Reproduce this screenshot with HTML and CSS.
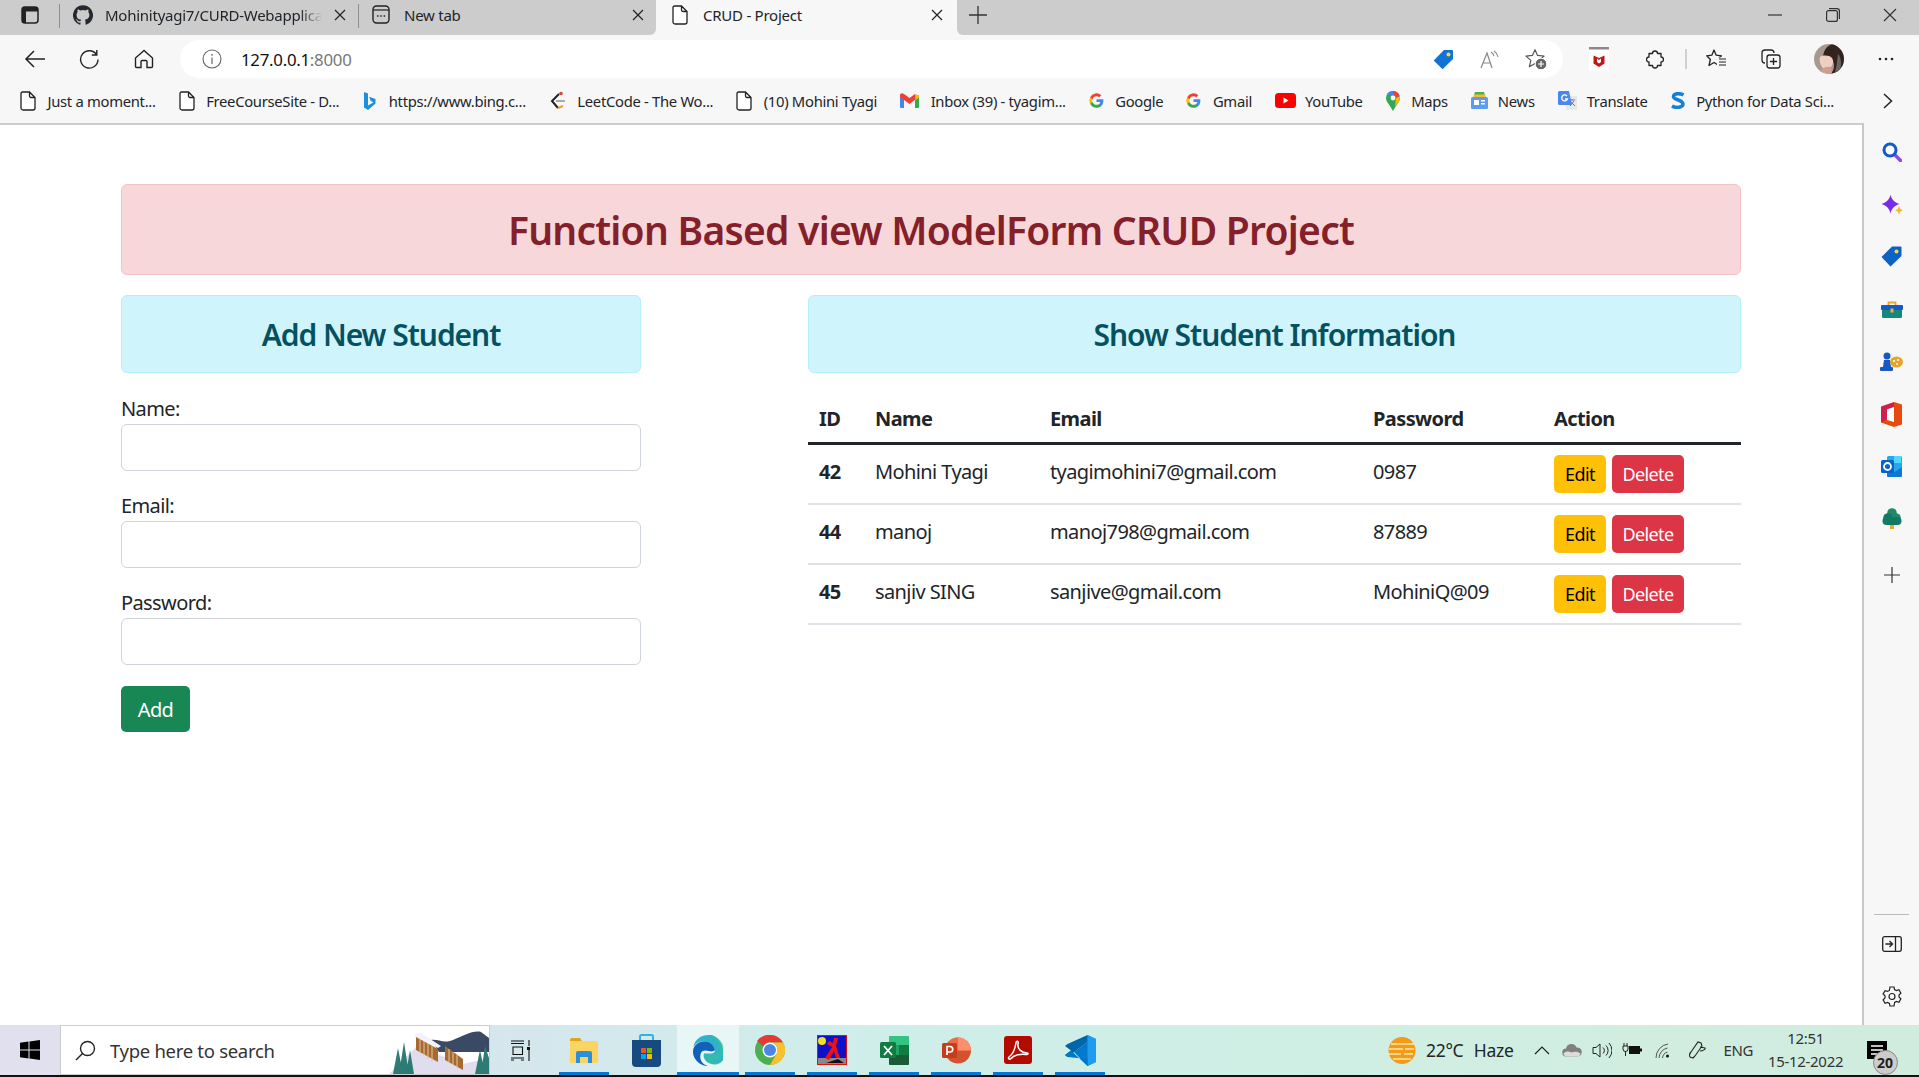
FILE: index.html
```html
<!DOCTYPE html>
<html>

<head>
    <meta charset="UTF-8">
    <title>CRUD - Project</title>
    <link rel="stylesheet" href="styles.css">
</head>

<body>
    <svg class="defs" width="0" height="0">
        <symbol id="doc" viewBox="0 0 16 20">
            <path d="M2.500 1h7L15 6.500V17a2 2 0 0 1-2 2H3a2 2 0 0 1-2-2V2.500A1.500 1.500 0 0 1 2.500 1zM9.500 1v4a1.500 1.500 0 0 0 1.500 1.500h4" fill="#fff" stroke="#222" stroke-width="1.300" />
        </symbol>
        <symbol id="google" viewBox="0 0 24 24">
            <path d="M23 12.300c0-.8-.1-1.600-.2-2.300H12v4.400h6.200a5.300 5.300 0 0 1-2.300 3.500v2.900h3.700c2.100-2 3.400-4.900 3.400-8.500z" fill="#4285f4" />
            <path d="M12 23.500c3.100 0 5.700-1 7.600-2.800l-3.700-2.900c-1 .7-2.300 1.100-3.900 1.100-3 0-5.500-2-6.400-4.700H1.800v3A11.500 11.500 0 0 0 12 23.500z" fill="#34a853" />
            <path d="M5.600 14.200a6.900 6.900 0 0 1 0-4.400v-3H1.800a11.500 11.500 0 0 0 0 10.400z" fill="#fbbc05" />
            <path d="M12 5.100c1.700 0 3.200.6 4.400 1.700l3.300-3.300A11.500 11.500 0 0 0 1.800 6.800l3.800 3C6.500 7.100 9 5.100 12 5.100z" fill="#ea4335" />
        </symbol>
    </svg>

    <div class="tabstrip">
        <div class="tabs-left">
            <div class="tab-side">
                <svg width="18" height="18" viewBox="0 0 18 18">
                    <rect x="1" y="1" width="16" height="16" rx="3" fill="none" stroke="#222" stroke-width="1.500" />
                    <path d="M1 2.500a1.500 1.500 0 0 1 1.500-1.500h13a1.500 1.500 0 0 1 1.500 1.500V5.500H1zM1 5h4v12H2a1 1 0 0 1-1-1z" fill="#222" />
                </svg>
            </div>
            <div class="tab tab-first">
                <svg width="20" height="20" viewBox="0 0 24 24">
                    <path d="M12 .3a12 12 0 0 0-3.800 23.400c.6.1.8-.3.8-.6v-2c-3.300.7-4-1.600-4-1.600-.6-1.400-1.400-1.800-1.400-1.800-1-.7.1-.7.1-.7 1.200 0 1.900 1.200 1.900 1.200 1 1.800 2.800 1.300 3.500 1 0-.8.4-1.300.7-1.600-2.700-.3-5.500-1.300-5.500-6 0-1.200.5-2.300 1.300-3.100-.2-.4-.6-1.600 0-3.200 0 0 1-.3 3.400 1.200a11.500 11.500 0 0 1 6 0c2.300-1.500 3.300-1.200 3.300-1.200.6 1.600.2 2.800 0 3.200.9.8 1.300 1.900 1.300 3.200 0 4.600-2.800 5.600-5.500 5.900.5.4.9 1 .9 2.200v3.300c0 .3.100.7.8.6A12 12 0 0 0 12 .3" fill="#24292f" />
                </svg>
                <span class="tab-title fade">Mohinityagi7/CURD-Webapplica</span>
                <svg class="tab-close" width="12" height="12" viewBox="0 0 12 12"><path d="M1 1l10 10M11 1L1 11" stroke="#222" stroke-width="1.200" /></svg>
            </div>
            <div class="tab tab-second">
                <svg width="18" height="19" viewBox="0 0 18 19">
                    <rect x="1" y="1" width="16" height="17" rx="3.500" fill="#ccc" stroke="#222" stroke-width="1.400" />
                    <path d="M1 5h16" stroke="#222" stroke-width="1.200" />
                    <path d="M5 11h1.500M8.300 11h1.500M11.600 11h1.500" stroke="#222" stroke-width="1.500" />
                </svg>
                <span class="tab-title">New tab</span>
                <svg class="tab-close" width="12" height="12" viewBox="0 0 12 12"><path d="M1 1l10 10M11 1L1 11" stroke="#222" stroke-width="1.200" /></svg>
            </div>
        </div>
        <div class="tab tab-active">
            <svg width="16" height="20"><use href="#doc" /></svg>
            <span class="tab-title">CRUD - Project</span>
            <svg class="tab-close" width="12" height="12" viewBox="0 0 12 12"><path d="M1 1l10 10M11 1L1 11" stroke="#222" stroke-width="1.200" /></svg>
        </div>
        <div class="tabs-right">
            <svg class="new-tab" width="18" height="18" viewBox="0 0 18 18"><path d="M9 0v18M0 9h18" stroke="#333" stroke-width="1.300" /></svg>
            <div class="window-btns">
                <span class="window-btn"><svg width="14" height="14" viewBox="0 0 14 14"><path d="M0 7h14" stroke="#333" stroke-width="1.200" /></svg></span>
                <span class="window-btn"><svg width="14" height="14" viewBox="0 0 14 14"><rect x=".6" y="2.600" width="10.800" height="10.800" rx="2" fill="none" stroke="#333" stroke-width="1.200" /><path d="M3 .6h8a2.400 2.400 0 0 1 2.400 2.400v8" fill="none" stroke="#333" stroke-width="1.200" /></svg></span>
                <span class="window-btn"><svg width="14" height="14" viewBox="0 0 14 14"><path d="M1 1l12 12M13 1L1 13" stroke="#333" stroke-width="1.200" /></svg></span>
            </div>
        </div>
    </div>

    <div class="toolbar">
        <div class="nav-btns">
            <svg width="22" height="18" viewBox="0 0 22 18"><path d="M21 9H2M10 1L2 9l8 8" fill="none" stroke="#222" stroke-width="1.500" /></svg>
            <svg width="21" height="21" viewBox="0 0 21 21"><path d="M17.500 5.500A8.700 8.700 0 1 0 19 10.500M17.800 1v5h-5" fill="none" stroke="#222" stroke-width="1.400" /></svg>
            <svg class="nav-home" width="20" height="20" viewBox="0 0 20 20"><path d="M10 1.500L1.500 9v8.500a1 1 0 0 0 1 1H7v-6a1 1 0 0 1 1-1h4a1 1 0 0 1 1 1v6h4.500a1 1 0 0 0 1-1V9z" fill="none" stroke="#222" stroke-width="1.400" /></svg>
        </div>
        <div class="address">
            <svg width="20" height="20" viewBox="0 0 20 20"><circle cx="10" cy="10" r="9" fill="none" stroke="#666" stroke-width="1.100" /><path d="M10 8.500V15" stroke="#666" stroke-width="1.200" /><circle cx="10" cy="5.800" r=".9" fill="#666" /></svg>
            <span class="url">127.0.0.1<span class="url-port">:8000</span></span>
            <div class="address-icons">
                <svg width="21" height="21" viewBox="0 0 21 21"><path d="M11 1h8a1 1 0 0 1 1 1v8L9.500 20.300 .7 11.500z" fill="#0f74d6" /><circle cx="15.500" cy="5.500" r="2" fill="#ffd24a" /></svg>
                <svg width="19" height="19" viewBox="0 0 19 19"><path d="M1 18L7 3l5 15M3 13h7" fill="none" stroke="#888" stroke-width="1.200" /><path d="M11 2a7 7 0 0 1 3 4M14 1a9 9 0 0 1 4 6" fill="none" stroke="#888" stroke-width="1.100" /></svg>
                <svg width="22" height="21" viewBox="0 0 22 21"><path d="M10 .7L12.600 6.400L19 7.100L14.200 11.400L15.600 17.700L10 14.400L4.400 17.700L5.800 11.400L1 7.100L7.400 6.400Z" fill="none" stroke="#555" stroke-width="1.200" stroke-linejoin="round" /><circle cx="16" cy="15" r="5.800" fill="#666" stroke="#fff" stroke-width="1" /><path d="M16 12v6M13 15h6" stroke="#fff" stroke-width="1.200" /></svg>
            </div>
        </div>
        <div class="toolbar-icons">
            <svg class="mcafee" width="20" height="24" viewBox="0 0 20 24"><rect width="20" height="24" fill="#fff" /><rect width="20" height="2.500" fill="#8a8a8a" /><path d="M4.500 8.500L10 11l5.500-2.500v8L10 20l-5.500-3.500z" fill="#c01818" /><path d="M8 11.500l2 1.500 2-1.500v3.500l-2 1.500-2-1.500z" fill="#fff" /></svg>
            <svg class="puzzle" width="18" height="19" viewBox="0 1 18 19"><path d="M3 4.500h3.500a2.500 2.500 0 0 1 5 0H15V8a2.500 2.500 0 0 1 0 5v3.500h-3.500a2.500 2.500 0 0 1-5 0H3V13a2.500 2.500 0 0 1 0-5z" fill="none" stroke="#222" stroke-width="1.300" stroke-linejoin="round" /></svg>
            <span class="toolbar-sep"></span>
            <svg class="favs" width="20" height="20" viewBox="0 0 20 20"><path d="M8 1L10.200 6.200L15.500 6.800L11.500 10.500L12.800 16.500L8 13.500L3 16.500L4.400 10.500L.7 6.800L5.800 6.200Z" fill="none" stroke="#222" stroke-width="1.300" stroke-linejoin="round" /><rect x="11" y="8.500" width="9" height="9" fill="#f7f7f7" /><path d="M13 10h7M13 13h7M13 16h7" stroke="#222" stroke-width="1.200" /></svg>
            <svg class="collections" width="20" height="20" viewBox="0 0 20 20"><path d="M4 14a3 3 0 0 1-3-3V4a3 3 0 0 1 3-3h6a3 3 0 0 1 3 3" fill="none" stroke="#222" stroke-width="1.300" /><rect x="6" y="6" width="13" height="13" rx="2.500" fill="#f7f7f7" stroke="#222" stroke-width="1.300" /><path d="M12.500 9v7M9 12.500h7" stroke="#222" stroke-width="1.300" /></svg>
            <svg class="avatar" width="30" height="30" viewBox="0 0 30 30">
                <defs><clipPath id="avatar-clip"><circle cx="15" cy="15" r="15" /></clipPath></defs>
                <g clip-path="url(#avatar-clip)">
                    <rect width="30" height="30" fill="#a8998f" />
                    <path d="M30 0v30H16c4-3 5-8 3-13-3-3-7-4-10-3C9 7 13 1 19 0z" fill="#33231f" />
                    <path d="M6 13c3-2 9-2 12 1 2 3 1 6-1 9-3 2-7 2-9 0-2-3-3-7-2-10z" fill="#efd0c0" />
                    <path d="M5 30c1-5 6-8 12-7l1 7z" fill="#cf9d8b" />
                    <path d="M24 10c3 3 4 10 2 17l-5 1c2-6 2-12 3-18z" fill="#6b6560" />
                </g>
            </svg>
            <svg class="dots" width="16" height="4" viewBox="0 0 16 4"><circle cx="2" cy="2" r="1.300" fill="#222" /><circle cx="8" cy="2" r="1.300" fill="#222" /><circle cx="14" cy="2" r="1.300" fill="#222" /></svg>
        </div>
    </div>

    <div class="bookmarks">
        <a class="bookmark"><svg width="16" height="20"><use href="#doc" /></svg>Just a moment...</a>
        <a class="bookmark"><svg width="16" height="20"><use href="#doc" /></svg>FreeCourseSite - D...</a>
        <a class="bookmark"><svg width="15" height="20" viewBox="0 0 13 20"><path d="M1 1l4 1.400v12l5.500-3.200-2.700-1.200-1.700-4.200L12.500 8v4.500L5 19l-4-2.500z" fill="#1b8fe0" /></svg>https://www.bing.c...</a>
        <a class="bookmark"><svg width="17" height="20" viewBox="0 0 17 20"><path d="M10 3L3 10l6 7" fill="none" stroke="#222" stroke-width="2" /><path d="M9 17l5-2" stroke="#f0a020" stroke-width="2" /><path d="M7 10h9" stroke="#aaa" stroke-width="2" /><circle cx="12" cy="2.500" r="1.800" fill="#e04040" /></svg>LeetCode - The Wo...</a>
        <a class="bookmark"><svg width="16" height="20"><use href="#doc" /></svg>(10) Mohini Tyagi</a>
        <a class="bookmark"><svg width="19" height="15" viewBox="0 0 19 15"><path d="M0 2.500h4V15H1.300A1.300 1.300 0 0 1 0 13.700z" fill="#4285f4" /><path d="M15 2.500h4v11.200a1.300 1.300 0 0 1-1.300 1.300H15z" fill="#34a853" /><path d="M15 1l4 1.500v2L15 7.500z" fill="#fbbc05" /><path d="M0 2.500C0 .5 2 -.5 4 1l5.500 4L15 1l.5 5.500-6 4.500L4 7 0 4.500z" fill="#ea4335" /></svg>Inbox (39) - tyagim...</a>
        <a class="bookmark"><svg width="15" height="15"><use href="#google" /></svg>Google</a>
        <a class="bookmark"><svg width="15" height="15"><use href="#google" /></svg>Gmail</a>
        <a class="bookmark bookmark-yt"><svg width="21" height="15" viewBox="0 0 21 15"><rect width="21" height="15" rx="3.500" fill="#f00" /><path d="M8.500 4.500v6l5-3z" fill="#fff" /></svg>YouTube</a>
        <a class="bookmark"><svg width="14" height="20" viewBox="0 0 14 20"><path d="M7 0a7 7 0 0 1 7 7c0 4-4 7-7 13C4 14 0 11 0 7a7 7 0 0 1 7-7z" fill="#34a853" /><path d="M1 3a7 7 0 0 1 6-3v5z" fill="#4285f4" /><path d="M7 0a7 7 0 0 1 6.500 4.500L10 7a3 3 0 0 0-3-3z" fill="#ea4335" /><path d="M10 7l3.800-1.500C14.500 9 11 13 9 15z" fill="#fbbc05" /><circle cx="7" cy="7" r="2.400" fill="#fff" /></svg>Maps</a>
        <a class="bookmark bookmark-tight"><svg width="17" height="17" viewBox="0 0 17 17"><path d="M3 3l1-3h9l1 3z" fill="#4caf50" /><path d="M2 5l1-2.500h11l1 2.500z" fill="#f9bb2d" /><rect y="5" width="17" height="12" rx="1.500" fill="#5b9cf2" /><rect x="3" y="8" width="5" height="5" fill="#fff" /><rect x="10" y="8" width="4" height="1.500" fill="#fff" /><rect x="10" y="11" width="4" height="1.500" fill="#fff" /></svg>News</a>
        <a class="bookmark bookmark-tight"><svg width="19" height="19" viewBox="0 0 19 19"><rect x="8" y="5" width="11" height="14" fill="#e8e8e8" /><path d="M11 9h6M14 8v1M12 15l4-5M13 11l4 4" stroke="#777" stroke-width="1" fill="none" /><path d="M1.500 0H11l3 14H1.500A1.500 1.500 0 0 1 0 12.500v-11A1.500 1.500 0 0 1 1.500 0z" fill="#4b86ed" /><path d="M9 5a3 3 0 1 0 .5 3H7" fill="none" stroke="#fff" stroke-width="1.300" /></svg>Translate</a>
        <a class="bookmark"><svg width="14" height="17" viewBox="0 0 14 17"><path d="M12.500 3C9 1 3 1 2.500 4.500 2 8 12 7.500 12 12c0 3.500-7 4.500-11 2" fill="none" stroke="#1480d8" stroke-width="3.500" /></svg>Python for Data Sci...</a>
        <svg class="bookmarks-more" width="10" height="16" viewBox="0 0 10 16"><path d="M1 1l7.500 7L1 15" fill="none" stroke="#222" stroke-width="1.500" /></svg>
    </div>

    <div class="workspace">
        <main class="page">
            <div class="alert alert-danger">
                <h1>Function Based view ModelForm CRUD Project</h1>
            </div>
            <div class="columns">
                <section>
                    <div class="alert alert-info">
                        <h2>Add New Student</h2>
                    </div>
                    <form class="student-form">
                        <label for="name">Name:</label>
                        <input id="name" type="text">
                        <label for="email">Email:</label>
                        <input id="email" type="text">
                        <label for="password">Password:</label>
                        <input id="password" type="text">
                        <button class="btn btn-success" type="button">Add</button>
                    </form>
                </section>
                <section>
                    <div class="alert alert-info">
                        <h2>Show Student Information</h2>
                    </div>
                    <table class="student-table">
                        <colgroup>
                            <col class="col-id">
                            <col class="col-name">
                            <col class="col-email">
                            <col class="col-pass">
                            <col class="col-action">
                        </colgroup>
                        <thead>
                            <tr>
                                <th>ID</th>
                                <th>Name</th>
                                <th>Email</th>
                                <th>Password</th>
                                <th>Action</th>
                            </tr>
                        </thead>
                        <tbody>
                            <tr>
                                <th>42</th>
                                <td>Mohini Tyagi</td>
                                <td>tyagimohini7@gmail.com</td>
                                <td>0987</td>
                                <td><button class="btn btn-warning" type="button">Edit</button><button class="btn btn-danger" type="button">Delete</button></td>
                            </tr>
                            <tr>
                                <th>44</th>
                                <td>manoj</td>
                                <td>manoj798@gmail.com</td>
                                <td>87889</td>
                                <td><button class="btn btn-warning" type="button">Edit</button><button class="btn btn-danger" type="button">Delete</button></td>
                            </tr>
                            <tr>
                                <th>45</th>
                                <td>sanjiv SING</td>
                                <td>sanjive@gmail.com</td>
                                <td>MohiniQ@09</td>
                                <td><button class="btn btn-warning" type="button">Edit</button><button class="btn btn-danger" type="button">Delete</button></td>
                            </tr>
                        </tbody>
                    </table>
                </section>
            </div>
        </main>
        <aside class="sidebar">
            <span class="side-item"><svg width="20" height="20" viewBox="0 0 20 20"><path d="M12 12l6.500 6.500" stroke="#8a4fe0" stroke-width="3.500" stroke-linecap="round" /><circle cx="8" cy="8" r="6" fill="#fff" stroke="#1259c9" stroke-width="3" /></svg></span>
            <span class="side-item"><svg width="22" height="22" viewBox="0 0 22 22"><path d="M9.500 .5c.8 4 3 7.500 9 9.500-6 2-8.200 5.500-9 9.500-.8-4-3-7.500-9-9.500 6-2 8.200-5.500 9-9.500z" fill="#7a2be8" /><path d="M18 12l1.200 3 2.800 1.200-2.800 1.200-1.200 3-1.200-3-2.800-1.200 2.800-1.200z" fill="#f5b81c" /></svg></span>
            <span class="side-item"><svg width="21" height="21" viewBox="0 0 21 21"><path d="M11 .5h8.500a1 1 0 0 1 1 1V10L9.500 20.500.5 11z" fill="#0d62c4" /><circle cx="15.500" cy="5.500" r="2" fill="#ffd24a" /></svg></span>
            <span class="side-item"><svg width="22" height="17" viewBox="0 0 22 17"><path d="M7.500 4V1.500h7V4" fill="none" stroke="#e8a92c" stroke-width="1.800" /><rect x="1" y="4" width="20" height="13" rx="1.500" fill="#15877c" /><rect y="4" width="22" height="5" rx="1" fill="#1758c4" /><rect x="9.500" y="7.500" width="3" height="4" fill="#f0b030" /></svg></span>
            <span class="side-item"><svg width="23" height="19" viewBox="0 0 23 19"><circle cx="7" cy="4" r="3.500" fill="#1758c4" /><path d="M4 8h6l1 7H3z" fill="#1758c4" /><rect y="15" width="13" height="4" rx="1" fill="#1758c4" /><ellipse cx="16.500" cy="10" rx="6.500" ry="5.500" fill="#e5a52c" /><circle cx="14" cy="9" r="1" fill="#fff" /><circle cx="18" cy="8" r="1" fill="#fff" /><circle cx="17" cy="12" r="1" fill="#fff" /></svg></span>
            <span class="side-item"><svg width="21" height="25" viewBox="0 0 21 25"><path d="M13 0l8 2.500v20L13 25 0 20.500z" fill="#e64a0d" /><path d="M0 4.500L13 0v5L6 7.500v10L0 20.500z" fill="#d01f4f" /><path d="M6 7.500L13 5v15l-7-2z" fill="#fff" /></svg></span>
            <span class="side-item"><svg width="21" height="21" viewBox="0 0 21 21"><rect x="6" width="15" height="21" rx="1.500" fill="#28a8ea" /><rect x="13" width="7" height="7" fill="#50d9ff" /><path d="M6 12l7.500 4 7.500-5v8.500a1.500 1.500 0 0 1-1.500 1.500h-12A1.500 1.500 0 0 1 6 19.500z" fill="#0f78d4" /><rect y="4" width="13" height="13" rx="1.500" fill="#0864c8" /><circle cx="6.500" cy="10.500" r="3.500" fill="none" stroke="#fff" stroke-width="1.800" /></svg></span>
            <span class="side-item"><svg width="20" height="21" viewBox="0 0 20 21"><rect x="8" y="15" width="4" height="6" fill="#f0a820" /><circle cx="10" cy="5" r="4.800" fill="#1f8a6a" /><circle cx="6" cy="10" r="4.800" fill="#127a62" /><circle cx="14" cy="10" r="4.800" fill="#1f8a6a" /><circle cx="4.500" cy="13" r="4" fill="#127a62" /><circle cx="15.500" cy="13" r="4" fill="#127a62" /><rect x="5" y="9" width="10" height="8" fill="#127a62" /></svg></span>
            <span class="side-item side-add"><svg width="16" height="16" viewBox="0 0 16 16"><path d="M8 0v16M0 8h16" stroke="#333" stroke-width="1.200" /></svg></span>
            <span class="side-sep"></span>
            <span class="side-item"><svg width="20" height="16" viewBox="0 0 20 16"><rect x=".7" y=".7" width="18.600" height="14.600" rx="2" fill="none" stroke="#222" stroke-width="1.300" /><path d="M13.500 1v14M3.500 8h7M7.500 5l3 3-3 3" fill="none" stroke="#222" stroke-width="1.300" /></svg></span>
            <span class="side-item"><svg width="20" height="21" viewBox="0 0 20 21"><path d="M8 1h4l.6 2.600 1.800 1 2.500-.8 2 3.400-1.900 1.800v2l1.900 1.800-2 3.400-2.500-.8-1.800 1L12 20H8l-.6-2.600-1.800-1-2.500.8-2-3.400L3 12V9.800L1.100 8l2-3.400 2.500.8 1.800-1z" fill="none" stroke="#222" stroke-width="1.200" /><circle cx="10" cy="10.500" r="3" fill="none" stroke="#222" stroke-width="1.200" /></svg></span>
        </aside>
    </div>

    <div class="taskbar">
        <div class="start">
            <svg width="20" height="20" viewBox="0 0 20 20"><path d="M0 2.800L8.500 1.600v8H0zM9.500 1.500L20 0v9.600H9.500zM0 10.500h8.500v8L0 17.300zM9.500 10.500H20V20L9.500 18.600z" fill="#000" /></svg>
        </div>
        <div class="search">
            <svg width="21" height="21" viewBox="0 0 21 21"><circle cx="12.500" cy="8.500" r="7" fill="none" stroke="#222" stroke-width="1.400" /><path d="M7.500 13.500L1 20" stroke="#222" stroke-width="1.500" /></svg>
            <span class="search-text">Type here to search</span>
            <svg class="search-art" width="100" height="48" viewBox="0 0 100 48">
                <path d="M42 14c8-1 12 4 22 0s20-10 28-8l8 6v14H50z" fill="#3a4a64" />
                <path d="M0 48L24 24l8-8 16 12 26 10 26-6v16z" fill="#e0ddee" />
                <path d="M26 8l6-1 20 13-3 2-23-11z" fill="#f4f2f9" />
                <path d="M27 11l22 12v13L27 24z" fill="#a8692e" />
                <path d="M31 13v14M35 15v15M39 17v16M43 20v16" stroke="#e3c9a4" stroke-width="1" />
                <path d="M56 20l18 13v11l-18-10z" fill="#a8692e" />
                <path d="M60 23v13M64 26v13M68 29v13" stroke="#e3c9a4" stroke-width="1" />
                <path d="M4 48l5-26 5 26zM10 48l5-32 5 32zM17 48l4-24 4 24z" fill="#2d7b74" />
                <path d="M86 48l5-24 5 24zM92 48l4-28 4 12v16z" fill="#2d7b74" />
            </svg>
        </div>
        <div class="task-view">
            <svg width="19" height="21" viewBox="0 0 19 21"><path d="M0 1h13M0 3.500h13M2 7h9.500v7.500H2zM0 18h13M0 20h3M10 20h3M18 0v6M18 10v11" fill="none" stroke="#111" stroke-width="1.100" /><rect x="16" y="7" width="3" height="3" fill="#111" /></svg>
        </div>
        <div class="app open">
            <svg width="28" height="26" viewBox="0 0 28 26"><path d="M0 3a2 2 0 0 1 2-2h8l2 3h-12z" fill="#e3a21a" /><rect y="4" width="28" height="22" rx="1.500" fill="#fcd462" /><path d="M8 14h12a2 2 0 0 1 2 2v10h-4v-6h-8v6H6V16a2 2 0 0 1 2-2z" fill="#2b8fdc" /></svg>
        </div>
        <div class="app">
            <svg width="29" height="33" viewBox="0 0 29 33"><path d="M8 6V2.500A1.500 1.500 0 0 1 9.500 1h10A1.500 1.500 0 0 1 21 2.500V6" fill="none" stroke="#32b0e8" stroke-width="2" /><path d="M0 6h29v23a4 4 0 0 1-4 4H4a4 4 0 0 1-4-4z" fill="#174a80" /><rect x="9" y="14" width="5" height="5" fill="#f25022" /><rect x="15" y="14" width="5" height="5" fill="#7fba00" /><rect x="9" y="20" width="5" height="5" fill="#00a4ef" /><rect x="15" y="20" width="5" height="5" fill="#ffb900" /></svg>
        </div>
        <div class="app open current">
            <svg width="31" height="31" viewBox="0 0 31 31"><path d="M15.500 0C8 0 1.500 4.500 .5 12 3 7.500 8 6 12 6.500c5 .5 9 4 10 8.500 0 1.500-1 3.500-4 3.500h-7c-1 2.500 0 6 3 8.500 5 3.500 12 2.500 16-1.500v-7.500c1-8-6-18.500-14.500-18.500z" fill="#2fb3c9" /><path d="M12 6.500C6 6 .5 10 0 16c-.5 8 7 15 15 15-7-2-9-8-7-13 1-3 5-3 8-2 3 1 5 0 6-1C21 10 17 7 12 6.500z" fill="#0f62b8" /><path d="M30.500 12C29 5 23 0 15.500 0 19 1 27 5 27 14c0 3-3 5.500-6 5.500-3.500 0-7.500-.5-10-1 0 2 .5 7 6 10 4 2 9 1 12-1.500-3 1-7 1-10-1 7 0 12-5 11-13z" fill="#35c1a3" opacity=".7" /></svg>
        </div>
        <div class="app open">
            <svg width="30" height="30" viewBox="0 0 30 30"><circle cx="15" cy="15" r="15" fill="#4caf50" /><path d="M15 0a15 15 0 0 1 13 7.500H15a7.500 7.500 0 0 0-6.500 3.700L2 6A15 15 0 0 1 15 0z" fill="#e53935" /><path d="M28 7.500A15 15 0 0 1 15 30l6.500-11.200A7.500 7.500 0 0 0 15 7.500z" fill="#fbc02d" /><circle cx="15" cy="15" r="7.500" fill="#fff" /><circle cx="15" cy="15" r="6" fill="#4a86e8" /></svg>
        </div>
        <div class="app open">
            <svg width="30" height="30" viewBox="0 0 30 30"><rect width="30" height="30" fill="#e01010" /><rect x="1" y="1" width="28" height="28" fill="#1010c8" /><circle cx="5" cy="6" r="4" fill="#f5e020" /><rect x="1" y="23" width="28" height="6" fill="#888" /><path d="M9 28l12-4 6 4z" fill="#111" /><path d="M17 3h4l-2 8 4 12h-4l-2-7-5 9-4-2 7-11-5-3 2-3 4 2z" fill="#f01010" /></svg>
        </div>
        <div class="app open">
            <svg width="29" height="29" viewBox="0 0 29 29"><path d="M9 0h19a1 1 0 0 1 1 1v8H9z" fill="#33c481" /><rect x="9" y="9" width="10" height="10" fill="#21a366" /><rect x="19" y="9" width="10" height="10" fill="#107c41" /><path d="M9 19h20v9a1 1 0 0 1-1 1H10a1 1 0 0 1-1-1z" fill="#185c37" /><rect y="6" width="16" height="16" rx="1.500" fill="#107c41" /><path d="M4 10l8 9M12 10l-8 9" stroke="#fff" stroke-width="1.800" /></svg>
        </div>
        <div class="app open">
            <svg width="29" height="29" viewBox="0 0 29 29"><circle cx="16" cy="14.500" r="13" fill="#d35230" /><path d="M16 1.500a13 13 0 0 1 13 13H16z" fill="#ff8f6b" /><path d="M16 1.500a13 13 0 0 0-13 13h13z" fill="#ed6c47" /><rect y="7" width="15" height="15" rx="1.500" fill="#c43e1c" /><path d="M5 19V10.500h3a2.500 2.500 0 0 1 0 5.500H5" fill="none" stroke="#fff" stroke-width="1.700" /></svg>
        </div>
        <div class="app open">
            <svg width="28" height="28" viewBox="0 0 28 28"><rect width="28" height="28" rx="3" fill="#b30b00" /><path d="M5 21c3-2 6-8 7-14 .3-3 3-2 2 1-1 5 4 9 9 9 2 0 1 2-1 1.500-5-1-12 .5-15 4-1.500 1.500-3.500 0-2-1.500z" fill="none" stroke="#fff" stroke-width="1.500" /></svg>
        </div>
        <div class="app open">
            <svg width="31" height="31" viewBox="0 0 31 31"><path d="M22.500 0L31 4v23l-8.500 4L9 17l13.500-10z" fill="#007acc" /><path d="M22.500 0L31 4v23l-8.500 4z" fill="#1f9cf0" /><path d="M2.500 9L0 11l6 4.500L0 20l2.500 2 20-15V0z" fill="#0065a9" /><path d="M2.500 22L0 20l6-4.500L22.500 31v-7z" fill="#0078c8" /></svg>
        </div>
        <div class="tray">
            <svg class="weather" width="29" height="29" viewBox="0 0 29 29"><circle cx="15" cy="14.500" r="13.500" fill="#f59a14" /><path d="M4 8h25M2 13h14M18 13h9M0 18h14M17 18h9M6 23h18" stroke="#fbe8b0" stroke-width="1.700" /></svg>
            <span class="weather-text">22°C&nbsp; Haze</span>
            <svg class="tray-icon tray-chevron" width="16" height="9" viewBox="0 0 16 9"><path d="M1 8l7-7 7 7" fill="none" stroke="#222" stroke-width="1.200" /></svg>
            <svg class="tray-icon" width="20" height="14" viewBox="0 0 20 14"><path d="M4.500 13.500a4 4 0 0 1-.5-8A5.500 5.500 0 0 1 14.500 4.500a4.500 4.500 0 0 1 1.500 9z" fill="#808080" /><path d="M1.500 10.500C4 8 7 8 9.500 9.500c2-1 6-1.500 9 1-.5 2-1.500 3-2.500 3H4.500c-1.500 0-2.500-1-3-3z" fill="#dcdcdc" /></svg>
            <svg class="tray-icon" width="20" height="17" viewBox="0 0 20 17"><path d="M1 5.500h3L8 2v13l-4-3.500H1zM11 5.500a4 4 0 0 1 0 6M14 3.500a7 7 0 0 1 0 10M17 1a11 11 0 0 1 0 15" fill="none" stroke="#222" stroke-width="1" /></svg>
            <svg class="tray-icon" width="20" height="14" viewBox="0 0 20 14"><path d="M2 0v3M5 0v3M1 3h5v3a2.500 2.500 0 0 1-5 0zM3.500 8v5" fill="none" stroke="#222" stroke-width="1" /><rect x="7" y="3" width="11" height="8" fill="#111" /><rect x="18" y="5.500" width="2" height="3" fill="#111" /></svg>
            <svg class="tray-icon tray-wifi" width="15" height="15" viewBox="0 0 15 15"><path d="M1 15A14 14 0 0 1 13 1M4 15A10.500 10.500 0 0 1 12.500 5M7.500 15A7 7 0 0 1 12.500 9" fill="none" stroke="#555" stroke-width="1" /><circle cx="12.500" cy="13" r="1.500" fill="#111" /></svg>
            <svg class="tray-icon tray-pen" width="20" height="20" viewBox="0 0 20 20"><path d="M6 18l-3-1c-1-2 0-4 1-5l7-10 3 1 1 3-7 10c-1 1-2 2-2 2zM13 7l5 1c1 1-2 3-5 3" fill="none" stroke="#222" stroke-width="1.100" /></svg>
            <span class="tray-lang">ENG</span>
            <div class="clock">
                <span>12:51</span>
                <span>15-12-2022</span>
            </div>
            <div class="notify">
                <svg width="20" height="18" viewBox="0 0 20 18"><path d="M0 0h20v18H0z" fill="#000" /><path d="M4 5h12M4 9h12M4 13h8" stroke="#fff" stroke-width="1.300" /></svg>
                <span class="notify-badge">20</span>
            </div>
        </div>
    </div>
</body>

</html>
```
FILE: styles.css
```css
* {
    margin: 0;
    padding: 0;
    box-sizing: border-box;
}

html,
body {
    height: 100%;
    overflow: hidden;
}

body {
    display: flex;
    flex-direction: column;
    font-family: "Noto Sans", "Open Sans", sans-serif;
    color: #212529;
    background-color: #fff;
}

svg {
    display: block;
    flex-shrink: 0;
}

.defs {
    position: absolute;
}

/* tab strip */
.tabstrip {
    display: flex;
    height: 35px;
    background-color: #f7f7f7;
    flex-shrink: 0;
}

.tabs-left {
    display: flex;
    width: 656px;
    background-color: #ccc;
    border-bottom-right-radius: 6px;
}

.tab-side {
    width: 60px;
    display: flex;
    align-items: center;
    padding: 0 0 5px 21px;
}

.tab-side,
.tab-first {
    background: linear-gradient(#8f8f8f, #8f8f8f) right 4px / 1px 24px no-repeat;
}

.tab {
    display: flex;
    align-items: center;
    font-size: 15px;
    letter-spacing: -.25px;
}

.tab-first {
    width: 299px;
    padding: 0 13px 6px;
    gap: 12px;
}

.tab-second {
    flex: 1;
    padding: 0 12px 6px 13px;
    gap: 14px;
}

.tab-active {
    width: 301px;
    padding: 0 14px 6px 16px;
    gap: 15px;
}

.tab-title {
    flex: 1;
    min-width: 0;
    white-space: nowrap;
}

.fade {
    -webkit-mask-image: linear-gradient(to right, #000 90%, transparent);
    mask-image: linear-gradient(to right, #000 90%, transparent);
}

.tabs-right {
    flex: 1;
    display: flex;
    align-items: center;
    background-color: #ccc;
    border-bottom-left-radius: 6px;
    padding: 0 0 5px 12px;
}

.window-btns {
    display: flex;
    margin-left: auto;
}

.window-btn {
    width: 57.500px;
    height: 30px;
    display: flex;
    align-items: center;
    justify-content: center;
}

/* address bar */
.toolbar {
    display: flex;
    align-items: center;
    height: 53px;
    padding: 5px 0 10px;
    background-color: #f7f7f7;
    flex-shrink: 0;
}

.nav-btns {
    display: flex;
    align-items: center;
    width: 180px;
    padding-left: 24px;
    gap: 33px;
}

.nav-home {
    margin-left: 1px;
}

.address {
    display: flex;
    align-items: center;
    width: 1383px;
    height: 38px;
    padding: 0 16px 0 22px;
    border-radius: 19px;
    background-color: #fff;
    gap: 19px;
}

.url {
    font-size: 16.800px;
    letter-spacing: -.25px;
    color: #111;
}

.url-port {
    color: #777;
}

.address-icons {
    display: flex;
    align-items: center;
    margin-left: auto;
    gap: 26px;
}

.toolbar-icons {
    flex: 1;
    display: flex;
    align-items: center;
    padding-left: 26px;
}

.puzzle {
    margin-left: 37px;
}

.toolbar-sep {
    width: 2px;
    height: 20px;
    margin-left: 21px;
    background-color: #d0d0d0;
}

.favs {
    margin-left: 19px;
}

.collections {
    margin-left: 35px;
}

.avatar {
    margin-left: 33px;
}

.dots {
    margin-left: 34px;
}

/* bookmarks */
.bookmarks {
    display: flex;
    align-items: center;
    height: 35px;
    padding: 0 0 10px 20px;
    background-color: #f7f7f7;
    font-size: 14.800px;
    letter-spacing: -.3px;
    flex-shrink: 0;
}

.bookmark {
    display: flex;
    align-items: center;
    gap: 11.500px;
    margin-right: 23px;
    white-space: nowrap;
}

.bookmark-yt {
    gap: 9px;
}

.bookmark-tight {
    gap: 10px;
}

.bookmarks-more {
    margin-left: auto;
    margin-right: 26px;
}

/* page */
.workspace {
    flex: 1;
    display: flex;
    min-height: 0;
}

.page {
    flex: 1;
    padding: 59px 121px 0;
    border-top: 2px solid #ccc;
    font-size: 20px;
    letter-spacing: -.6px;
}

.alert {
    display: flex;
    align-items: center;
    justify-content: center;
    border: 1px solid transparent;
    border-radius: 6px;
    text-align: center;
}

.alert-danger {
    height: 91px;
    margin-bottom: 20px;
    background-color: #f8d7da;
    border-color: #f5c2c7;
    color: #842029;
}

.alert-info {
    height: 78px;
    background-color: #cff4fc;
    border-color: #b6effb;
    color: #055160;
}

h1 {
    font-size: 39px;
    font-weight: 600;
    letter-spacing: -.75px;
}

h2 {
    font-size: 30px;
    font-weight: 600;
    letter-spacing: -1.050px;
}

.columns {
    display: grid;
    grid-template-columns: 520px 933px;
    column-gap: 167px;
}

.student-form {
    display: flex;
    flex-direction: column;
    align-items: flex-start;
    padding-top: 21px;
}

.student-form label {
    line-height: 30px;
}

.student-form input {
    width: 100%;
    height: 47px;
    margin-bottom: 20px;
    border: 1px solid #ced4da;
    border-radius: 6px;
}

.btn {
    height: 38px;
    border: 1px solid transparent;
    border-radius: 5px;
    font-family: inherit;
    font-size: 18px;
    letter-spacing: -.6px;
    vertical-align: top;
}

.btn-success {
    width: 69px;
    height: 46px;
    margin-top: 1px;
    background-color: #198754;
    color: #fff;
    font-size: 20px;
}

.btn-warning {
    width: 52px;
    margin-right: 6px;
    background-color: #ffc107;
    color: #000;
}

.btn-danger {
    width: 72px;
    background-color: #dc3545;
    color: #fff;
}

.student-table {
    width: 100%;
    margin-top: 21px;
    border-collapse: collapse;
    table-layout: fixed;
}

.col-id {
    width: 56px;
}

.col-name {
    width: 175px;
}

.col-email {
    width: 323px;
}

.col-pass {
    width: 181px;
}

.student-table th,
.student-table td {
    padding: 12px 11px 0;
    line-height: 30px;
    text-align: left;
    vertical-align: top;
    border-bottom: 2px solid #dee2e6;
}

.student-table thead th {
    padding: 10px 11px 8px;
    border-bottom: 3px solid #212529;
}

.student-table td:last-child {
    padding: 10px 11px;
    white-space: nowrap;
}

/* right side panel */
.sidebar {
    display: flex;
    flex-direction: column;
    align-items: center;
    width: 57px;
    padding: 3px 0 2px;
    border-left: 2px solid #c8c8c8;
    background-color: #f7f7f7;
}

.side-item {
    display: flex;
    align-items: center;
    justify-content: center;
    height: 52.400px;
    flex-shrink: 0;
}

.side-add {
    margin-top: 4px;
}

.side-sep {
    width: 35px;
    height: 1px;
    margin-top: auto;
    margin-bottom: 3px;
    background-color: #bbb;
}

/* windows taskbar */
.taskbar {
    display: flex;
    height: 52px;
    flex-shrink: 0;
    border-bottom: 2px solid #111;
    background: linear-gradient(to right, #e2e0ee 0, #d6e6ee 25%, #cfeeea 45%, #d0eee2 75%, #d0ecdf 100%);
}

.start {
    width: 60px;
    display: flex;
    align-items: center;
    padding-left: 20px;
}

.search {
    display: flex;
    align-items: center;
    width: 430px;
    padding-left: 14px;
    gap: 14px;
    border: 1px solid #ccc;
    background-color: #fff;
    position: relative;
    overflow: hidden;
    font-size: 18.500px;
    letter-spacing: -.3px;
    color: #333;
}

.search-art {
    position: absolute;
    right: 0;
    bottom: 0;
}

.task-view {
    width: 63px;
    display: flex;
    align-items: center;
    padding-left: 21px;
}

.app {
    width: 62px;
    display: flex;
    align-items: center;
    justify-content: center;
    position: relative;
}

.app.open::after {
    content: "";
    position: absolute;
    left: 6px;
    right: 6px;
    bottom: 0;
    height: 3px;
    background-color: #0078d4;
}

.app.current {
    background-color: #e8f7f6;
}

.app.current::after {
    left: 0;
    right: 0;
}

.tray {
    flex: 1;
    display: flex;
    align-items: center;
    padding-left: 276px;
}

.weather-text {
    margin-left: 10px;
    font-size: 17.500px;
    letter-spacing: -.3px;
    white-space: pre;
    word-spacing: 1px;
}

.tray-icon {
    margin-left: 10px;
}

.tray-chevron {
    margin-left: 20px;
}

.tray-chevron + .tray-icon {
    margin-left: 12px;
}

.tray-wifi {
    margin-left: 13px;
}

.tray-pen {
    margin-left: 17px;
}

.tray-lang {
    width: 30px;
    margin-left: 17px;
    font-size: 15px;
    letter-spacing: -.4px;
    color: #333;
}

.clock {
    display: flex;
    flex-direction: column;
    align-items: center;
    margin-left: 15px;
    width: 74px;
    font-size: 15px;
    letter-spacing: -.3px;
    line-height: 23px;
    white-space: nowrap;
    color: #333;
}

.notify {
    position: relative;
    margin-left: 24px;
}

.notify-badge {
    position: absolute;
    left: 6px;
    top: 9px;
    width: 25px;
    height: 25px;
    border-radius: 50%;
    border: 1px solid #888;
    background-color: #ccc;
    text-align: center;
    font-size: 14px;
    font-weight: 700;
    line-height: 23px;
    color: #222;
}
```
